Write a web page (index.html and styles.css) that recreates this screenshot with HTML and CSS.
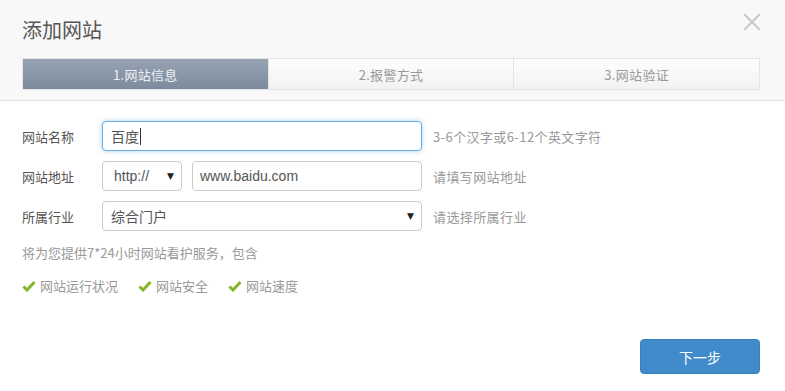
FILE: index.html
```html
<!DOCTYPE html>
<html lang="zh">
<head>
<meta charset="utf-8">
<title>添加网站</title>
<link rel="stylesheet" href="styles.css">
</head>
<body>
<div class="dialog">
  <div class="header">
    <h1 class="title">添加网站</h1>
    <svg class="close" width="18" height="18" viewBox="0 0 18 18"><path d="M1 1L17 17M17 1L1 17" stroke="#c8c8c8" stroke-width="2" fill="none"/></svg>
    <div class="steps">
      <div class="step active">1.网站信息</div>
      <div class="step">2.报警方式</div>
      <div class="step">3.网站验证</div>
    </div>
  </div>
  <div class="body">
    <div class="row">
      <span class="label">网站名称</span>
      <div class="field focus wide"><span class="val cjk">百度</span><span class="caret"></span></div>
      <span class="hint">3-6个汉字或6-12个英文字符</span>
    </div>
    <div class="row">
      <span class="label">网站地址</span>
      <div class="group">
        <div class="field sel-small"><span class="val">http://</span><span class="arrow">▼</span></div>
        <div class="field url"><span class="val url-val">www.baidu.com</span></div>
      </div>
      <span class="hint">请填写网站地址</span>
    </div>
    <div class="row">
      <span class="label">所属行业</span>
      <div class="field wide sel"><span class="val cjk">综合门户</span><span class="arrow">▼</span></div>
      <span class="hint">请选择所属行业</span>
    </div>
    <p class="info">将为您提供7*24小时网站看护服务，包含</p>
    <div class="checks">
      <span class="check"><svg width="14" height="12" viewBox="0 0 14 12"><path d="M1.5 6.5L5 10L12.5 2" stroke="#86b52a" stroke-width="3" fill="none"/></svg>网站运行状况</span>
      <span class="check"><svg width="14" height="12" viewBox="0 0 14 12"><path d="M1.5 6.5L5 10L12.5 2" stroke="#86b52a" stroke-width="3" fill="none"/></svg>网站安全</span>
      <span class="check"><svg width="14" height="12" viewBox="0 0 14 12"><path d="M1.5 6.5L5 10L12.5 2" stroke="#86b52a" stroke-width="3" fill="none"/></svg>网站速度</span>
    </div>
    <div class="footer">
      <button class="next">下一步</button>
    </div>
  </div>
</div>
</body>
</html>
```

FILE: styles.css
```css
* { box-sizing: border-box; }
html, body { margin: 0; padding: 0; background: #fff; }
body {
  font-family: "Noto Sans CJK SC", "Liberation Sans", sans-serif;
  width: 785px;
  height: 391px;
  overflow: hidden;
}
.dialog { width: 785px; }
.header {
  position: relative;
  background: #f8f8f8;
  border-bottom: 1px solid #e3e3e3;
  padding: 15px 25px 10px 22px;
  height: 101px;
}
.title {
  margin: 0;
  font-size: 20px;
  font-weight: normal;
  line-height: 30px;
  color: #555;
}
.close { position: absolute; right: 24px; top: 13px; }
.steps {
  margin-top: 13px;
  display: flex;
  height: 32px;
  border: 1px solid #e5e5e5;
}
.step {
  flex: 1;
  display: flex;
  align-items: center;
  justify-content: center;
  font-size: 13px;
  color: #999;
  letter-spacing: 0.3px;
  background: linear-gradient(#fefefe, #f2f2f2);
  border-left: 1px solid #e5e5e5;
}
.step:first-child { border-left: none; }
.step.active {
  background: linear-gradient(#96a3b3, #7c8b9d);
  color: #eef1f4;
}
.body { padding: 20px 25px 0 22px; }
.row {
  display: flex;
  align-items: center;
  height: 30px;
  margin-bottom: 10px;
}
.label { width: 80px; font-size: 13px; color: #555; }
.field {
  height: 30px;
  border: 1px solid #ccc;
  border-radius: 4px;
  background: #fff;
  display: flex;
  align-items: center;
  padding: 0 8px;
  font-size: 14px;
  color: #555;
}
.wide { width: 320px; }
.focus {
  border-color: #66afe9;
  box-shadow: 0 0 5px rgba(102,175,233,0.55);
}
.caret { width: 1px; height: 17px; background: #333; margin-left: 1px; }
.val { font-family: "Liberation Sans", "Noto Sans CJK SC", sans-serif; }
.val.cjk { font-family: "Noto Sans CJK SC", sans-serif; }
.group { display: flex; gap: 10px; width: 320px; }
.sel-small { width: 80px; padding-left: 11px; justify-content: space-between; }
.url { width: 230px; padding-left: 7px; }
.url-val { font-size: 14px; color: #555; }
.sel { justify-content: space-between; }
.arrow { font-size: 9px; color: #222; font-family: "DejaVu Sans", sans-serif; margin-right: -1px; }
.hint { margin-left: 11px; font-size: 13px; color: #999; letter-spacing: 0.4px; }
.info {
  margin: 12px 0 0;
  font-size: 13px;
  color: #999;
  line-height: 20px;
}
.checks {
  display: flex;
  gap: 20px;
  margin-top: 13px;
  font-size: 13px;
  color: #999;
  line-height: 20px;
}
.check { display: flex; align-items: center; gap: 4px; }
.footer {
  display: flex;
  justify-content: flex-end;
  margin-top: 43px;
}
.next {
  width: 120px;
  height: 35px;
  background: #428bca;
  border: 1px solid #3a7fbd;
  border-radius: 4px;
  color: #fff;
  font-size: 14px;
  font-family: "Noto Sans CJK SC", sans-serif;
}
```
